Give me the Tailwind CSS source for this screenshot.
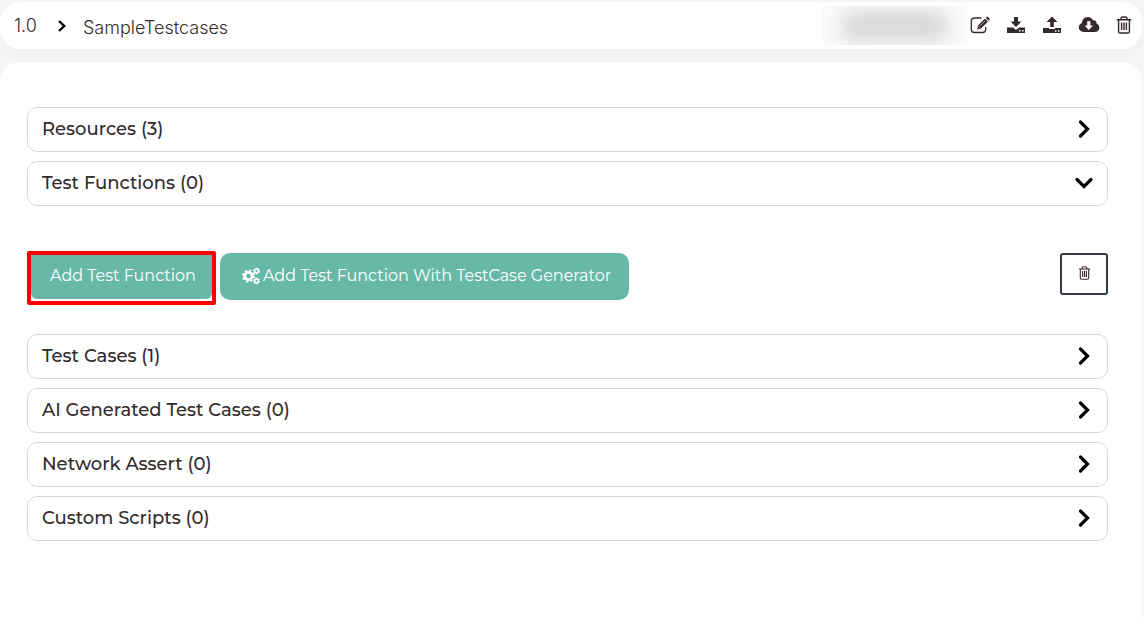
<!DOCTYPE html>
<html lang="en">
<head>
<meta charset="utf-8">
<meta name="viewport" content="width=device-width, initial-scale=1">
<title>SampleTestcases</title>
<script src="https://cdn.jsdelivr.net/npm/@tailwindcss/browser@4"></script>
</head>
<body class="min-h-screen flex flex-col bg-[#f5f5f7] pr-0.5 font-['Montserrat','Inter',sans-serif] text-[#332a2c]">
<svg class="hidden" aria-hidden="true">
  <symbol id="chevron" viewBox="0 0 20 20"><path d="M6.5 3 13.5 10 6.5 17" fill="none" stroke="#000" stroke-width="3.2" stroke-linecap="round" stroke-linejoin="miter"/></symbol>
  <symbol id="trash" viewBox="0 0 16 18"><g fill="none" stroke="currentColor" stroke-width="1.4"><path d="M.8 3.8h14.4M5 3.6V2.6C5 1.6 5.6 1 6.6 1h2.8c1 0 1.600.6 1.600 1.600v1M2.600 4v11.400c0 1 .6 1.600 1.600 1.600h7.600c1 0 1.600-.6 1.600-1.600V4M5.600 6.500v7.500M8 6.500v7.500M10.400 6.500v7.500"/></g></symbol>
</svg>

<header class="mt-0.5 flex h-[47px] items-center rounded-[20px] bg-white pl-3.5 pr-2.5 shadow-[0_8px_14px_rgba(0,0,0,0.02)]">
  <nav aria-label="Breadcrumb" class="flex flex-1 items-center font-['Inter',sans-serif] text-lg font-light">
    <a href="#" class="w-[38px]">1.0</a>
    <svg class="mr-[13px] size-[18px]" viewBox="0 0 18 18" aria-hidden="true"><path d="M7 4 12.200 9 7 14" fill="none" stroke="#000" stroke-width="2.400"/></svg>
    <a href="#" class="pt-1">SampleTestcases</a>
  </nav>
  <div class="mr-[3px] h-[39px] w-[145px] overflow-hidden bg-[#fbfbfb]" aria-hidden="true"><div class="mx-5 mt-1.5 h-[28px] bg-[#d4d4d4] blur-[10px]"></div></div>
  <div class="flex items-center gap-4 pb-0.5">
    <button type="button" aria-label="Edit" class="block"><svg class="h-[18px] w-5" viewBox="0 0 20 18"><path d="M11.500 2H4.500C2.500 2 1.300 3.200 1.300 5v8.500c0 1.800 1.200 3 3.200 3h8c2 0 3.200-1.200 3.200-3V11" fill="none" stroke="currentColor" stroke-width="1.300"/><path d="m8 9.600 7-7 3 3-7 7-3.800.8zM15.800 1.900l.8-.8c.4-.4 1-.4 1.400 0l1.500 1.500c.4.4.4 1 0 1.400l-.8.8z" fill="currentColor"/><path d="m10 10 5.300-5.300M8.700 10.400l1.500 1.500" stroke="#fff" stroke-width=".6"/></svg></button>
    <button type="button" aria-label="Download" class="block"><svg class="h-[18px] w-5" viewBox="0 0 20 18" fill="currentColor"><path d="M8 1h4v4.500h3.500L10 11 4.500 5.500H8z"/><path fill-rule="evenodd" d="M1 11.500h6L10 14l3-2.500h6V17H1zM13 14v1.500h1.500V14zm3 0v1.500h1.500V14z"/></svg></button>
    <button type="button" aria-label="Upload" class="block"><svg class="h-[18px] w-5" viewBox="0 0 20 18" fill="currentColor"><path d="M8.200 11V6H4.500L10 .6 15.500 6h-3.700v5z"/><path fill-rule="evenodd" d="M1 12h6v1h6v-1h6v5H1zM13 14.300v1.400h1.500v-1.400zm3 0v1.400h1.500v-1.400z"/></svg></button>
    <button type="button" aria-label="Download from cloud" class="block"><svg class="h-[18px] w-[22px]" viewBox="0 0 22 18"><path d="M6 16C3 16 .8 14 .8 11.300c0-2.100 1.200-3.700 3.200-4.400C4 3.800 6.500 1 9.800 1c2.500 0 4.300 1.300 5.200 3.300 2.300-.4 4 1.300 3.600 3.500 1.700.6 2.800 2.100 2.800 3.900 0 2.500-1.900 4.300-4.500 4.300z" fill="currentColor"/><path d="M9.200 5.300h3.200v4.200H15l-4.200 4.400-4.200-4.400h2.600z" fill="#fff"/></svg></button>
    <button type="button" aria-label="Delete" class="block"><svg class="h-[18px] w-4"><use href="#trash"/></svg></button>
  </div>
</header>

<main class="mt-[13px] flex flex-1 flex-col gap-[9px] rounded-t-[20px] bg-white pl-[27px] pr-[34px] pt-[45px] text-lg font-medium">
  <button type="button" class="flex h-[45px] items-center justify-between rounded-[10px] border border-[#d8d8d8] pb-px pl-3.5 pr-[13px]">Resources (3)<svg class="size-5"><use href="#chevron"/></svg></button>
  <button type="button" aria-expanded="true" class="flex h-[45px] items-center justify-between rounded-[10px] border border-[#d8d8d8] pb-px pl-3.5 pr-[13px]">Test Functions (0)<svg class="size-5 rotate-90"><use href="#chevron"/></svg></button>

  <section aria-label="Test function actions" class="mb-5 mt-9 flex items-start text-base font-normal">
    <div class="rounded-[2px] border-[4px] border-[#fe0000]">
      <button type="button" class="mb-0.5 block h-11 rounded-b-[6px] bg-[#67b8a7] pb-0.5 pl-[19px] pr-4 text-white">Add Test Function</button>
    </div>
    <button type="button" class="ml-1 mt-0.5 flex h-[47px] items-center gap-[3px] rounded-[10px] bg-[#67b8a7] pb-0.5 pl-[22px] pr-[18px] text-white">
      <svg class="size-[18px]" viewBox="0 0 18 18" fill="none" stroke="#fff" aria-hidden="true"><circle cx="6.500" cy="9" r="3.700" stroke-width="2.800"/><circle cx="6.500" cy="9" r="5.500" stroke-width="2" stroke-dasharray="2.160 2.160"/><circle cx="14.500" cy="4" r="1.900" stroke-width="1.500"/><circle cx="14.500" cy="4" r="2.800" stroke-width="1.200" stroke-dasharray="1.460 1.460"/><circle cx="14.500" cy="14" r="1.900" stroke-width="1.500"/><circle cx="14.500" cy="14" r="2.800" stroke-width="1.200" stroke-dasharray="1.460 1.460"/></svg>
      Add Test Function With TestCase Generator
    </button>
    <button type="button" aria-label="Delete test functions" class="ml-auto mt-0.5 flex h-[42px] w-12 items-center justify-center rounded-[3px] border-2 border-[#343d46] pb-0.5"><svg class="h-[14px] w-[13px]"><use href="#trash"/></svg></button>
  </section>

  <button type="button" class="flex h-[45px] items-center justify-between rounded-[10px] border border-[#d8d8d8] pb-px pl-3.5 pr-[13px]">Test Cases (1)<svg class="size-5"><use href="#chevron"/></svg></button>
  <button type="button" class="flex h-[45px] items-center justify-between rounded-[10px] border border-[#d8d8d8] pb-px pl-3.5 pr-[13px]">AI Generated Test Cases (0)<svg class="size-5"><use href="#chevron"/></svg></button>
  <button type="button" class="flex h-[45px] items-center justify-between rounded-[10px] border border-[#d8d8d8] pb-px pl-3.5 pr-[13px]">Network Assert (0)<svg class="size-5"><use href="#chevron"/></svg></button>
  <button type="button" class="flex h-[45px] items-center justify-between rounded-[10px] border border-[#d8d8d8] pb-px pl-3.5 pr-[13px]">Custom Scripts (0)<svg class="size-5"><use href="#chevron"/></svg></button>
</main>
</body>
</html>
